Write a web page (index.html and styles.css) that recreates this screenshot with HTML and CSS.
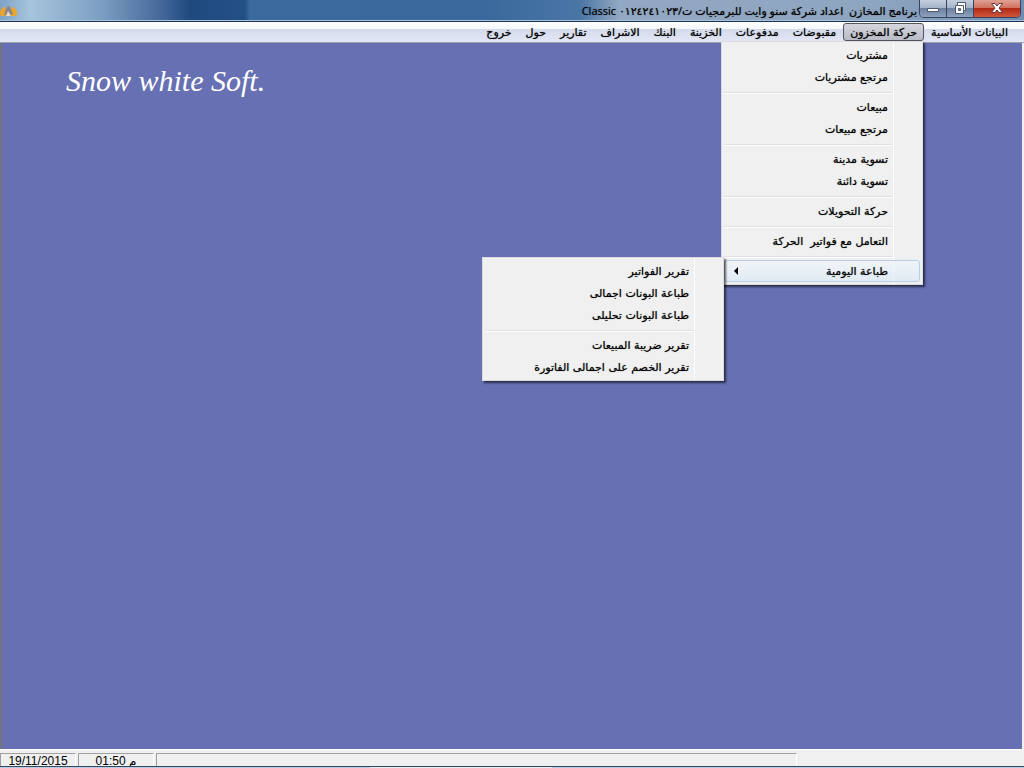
FILE: index.html
```
<!DOCTYPE html>
<html lang="ar">
<head>
    <meta charset="UTF-8">
    <meta name="viewport" content="width=device-width, initial-scale=1.0">
    <title>برنامج المخازن</title>
    <link rel="stylesheet" href="styles.css">
</head>
<body>
    <header class="titlebar">
        <svg class="app-icon" viewBox="0 0 17 12" aria-hidden="true">
            <path d="M0 10C-1 6 2 2 5 2l3 9H2zM17 10c1-4-2-8-5-8l-3 9h6z" fill="#e9a52c"/>
            <path d="M4 10l2-6 2-3 2 1 3 7-2 1z" fill="#8b8590"/>
            <path d="M6 11l2-5 3 5z" fill="#e8dcc0"/>
        </svg>
        <h1 class="title" dir="rtl">برنامج المخازن&nbsp; اعداد شركة سنو وايت للبرمجيات ت/٠١٢٤٢٤١٠٢٣ Classic</h1>
        <div class="controls">
            <button class="control" type="button" aria-label="تصغير">
                <svg viewBox="0 0 14 12"><path d="M1.500 6.500h11v3h-11z" fill="#fff" stroke="#4d5a70"/></svg>
            </button>
            <button class="control" type="button" aria-label="استعادة">
                <svg viewBox="0 0 14 12"><path d="M4.500.5h8v8h-2v3h-8v-8h2z" fill="#fff" stroke="#4d5a70"/><path d="M4.500 3.500h6v5" fill="none" stroke="#4d5a70"/><path d="M5.500 6.500h2v2h-2z" fill="#7c8ba5" stroke="#4d5a70"/></svg>
            </button>
            <button class="control close" type="button" aria-label="إغلاق">
                <svg viewBox="0 0 14 12"><path d="M1.500 1.500h3.500L7 4l2-2.500h3.500L9 6l3.500 4.500H9L7 8l-2 2.500H1.500L5 6z" fill="#fff" stroke="#6b3a3c"/></svg>
            </button>
        </div>
    </header>

    <nav dir="rtl">
        <ul class="menubar">
            <li><button type="button">البيانات الأساسية</button></li>
            <li class="open">
                <button type="button">حركة المخزون</button>
                <ul class="menu">
                    <li><button type="button">مشتريات</button></li>
                    <li><button type="button">مرتجع مشتريات</button></li>
                    <li class="separator"></li>
                    <li><button type="button">مبيعات</button></li>
                    <li><button type="button">مرتجع مبيعات</button></li>
                    <li class="separator"></li>
                    <li><button type="button">تسوية مدينة</button></li>
                    <li><button type="button">تسوية دائنة</button></li>
                    <li class="separator"></li>
                    <li><button type="button">حركة التحويلات</button></li>
                    <li class="separator"></li>
                    <li><button type="button">التعامل مع فواتير&nbsp; الحركة</button></li>
                    <li class="separator"></li>
                    <li class="parent">
                        <button class="selected" type="button">طباعة اليومية
                            <svg class="arrow" viewBox="0 0 4 8"><path d="M4 0v8L0 4z"/></svg>
                        </button>
                        <ul class="menu submenu">
                            <li><button type="button">تقرير الفواتير</button></li>
                            <li><button type="button">طباعة البونات اجمالى</button></li>
                            <li><button type="button">طباعة البونات تحليلى</button></li>
                            <li class="separator"></li>
                            <li><button type="button">تقرير ضريبة المبيعات</button></li>
                            <li><button type="button">تقرير الخصم على اجمالى الفاتورة</button></li>
                        </ul>
                    </li>
                </ul>
            </li>
            <li><button type="button">مقبوضات</button></li>
            <li><button type="button">مدفوعات</button></li>
            <li><button type="button">الخزينة</button></li>
            <li><button type="button">البنك</button></li>
            <li><button type="button">الاشراف</button></li>
            <li><button type="button">تقارير</button></li>
            <li><button type="button">حول</button></li>
            <li><button type="button">خروج</button></li>
        </ul>
    </nav>

    <main class="workspace">
        <p class="brand">Snow white Soft.</p>
    </main>

    <footer class="statusbar">
        <div class="panel">19/11/2015</div>
        <div class="panel">01:50 م</div>
        <div class="panel message"></div>
    </footer>
    <div class="taskbar"></div>
</body>
</html>
```
FILE: styles.css
```
* {
    box-sizing: border-box;
}

body {
    margin: 0;
    height: 100vh;
    display: flex;
    flex-direction: column;
    overflow: hidden;
    background: #f0f0f0;
    color: #000;
    font-family: "DejaVu Sans", sans-serif;
    font-size: 11px;
}

ul {
    list-style: none;
    margin: 0;
    padding: 0;
}

button {
    font: inherit;
    color: inherit;
    text-shadow: inherit;
    margin: 0;
    border: 0;
    background: none;
}

/* title bar */
.titlebar {
    display: flex;
    align-items: flex-start;
    height: 22px;
    padding-right: 3px;
    border-bottom: 1px solid #1c3358;
    background: linear-gradient(90deg, #7fa3c8 0, #a6c4dc 30px, #7d9fc3 100px, #46699a 160px, #1f4a80 190px, #234f87 245px, #3a6a9e 250px, #38689c 480px, #4a76a6 580px, #93a8c2 620px, #8ea5c0 880px, #6f8cb0 100%);
    box-shadow: inset 0 -1px #a9c1da;
}

.app-icon {
    width: 17px;
    height: 12px;
    margin-top: 5px;
}

.title {
    flex: 1;
    margin: 0 2px 0 0;
    font-family: "Open Sans", "DejaVu Sans", sans-serif;
    font-size: 11px;
    font-weight: normal;
    line-height: 22px;
    white-space: nowrap;
    text-shadow: 0 0 1px rgba(0, 0, 0, 0.6);
}

.controls {
    display: flex;
    height: 18px;
    border: 1px solid #34445f;
    border-top: 0;
    border-radius: 0 0 5px 5px;
    overflow: hidden;
}

.control {
    width: 27px;
    padding: 0 0 1px;
    border-right: 1px solid #34445f;
    background: linear-gradient(#c3cedd 0, #a3b2c8 50%, #6d819f 50%, #8fa3bf 100%);
}

.control svg {
    display: block;
    width: 14px;
    height: 12px;
    margin: 0 auto;
}

.control.close {
    width: 46px;
    border-right: 0;
    background: linear-gradient(#dfa193 0, #cf6d5b 50%, #b32a17 50%, #d0553a 100%);
}

/* menus */
.menubar {
    display: flex;
    height: 21px;
    padding: 1px 9px 0;
    border-bottom: 1px solid #a0a3ae;
    background: linear-gradient(#fff 0, #f5f7fb 7px, #d6dbec 7px, #e2e6f5 100%);
    text-shadow: 0 0 1px rgba(0, 0, 0, 0.6);
}

.menubar > li > button {
    height: 18px;
    padding: 1px 6px 0;
    border: 1px solid transparent;
    line-height: 16px;
    white-space: nowrap;
}

.open {
    position: relative;
}

.menubar > .open > button {
    border-color: #55555f;
    border-radius: 3px;
    background: linear-gradient(#d5d6dd, #b9bbc7);
}

.menu {
    position: absolute;
    top: 18px;
    right: 1px;
    z-index: 1;
    width: 202px;
    padding: 2px;
    border: 1px solid #dcdce0;
    background: linear-gradient(#fff, #fff) right 28px top 0 / 1px 100% no-repeat #f0f0f0;
    box-shadow: 2px 2px 2px rgba(0, 0, 0, 0.6);
}

.menu button {
    display: flex;
    align-items: center;
    justify-content: space-between;
    width: 100%;
    height: 22px;
    padding: 0 32px 0 10px;
    white-space: nowrap;
}

.menu .selected {
    border: 1px solid #b4d0e6;
    border-radius: 3px;
    padding: 0 31px 0 9px;
    background: linear-gradient(rgba(240, 245, 250, 0.8), rgba(215, 230, 245, 0.6));
}

.arrow {
    width: 4px;
    height: 8px;
}

.separator {
    height: 8px;
    padding: 4px 28px 0 0;
}

.separator::before {
    content: "";
    display: block;
    border-top: 1px solid #e0e0e0;
    border-bottom: 1px solid #fff;
}

.parent {
    position: relative;
}

.submenu {
    top: -3px;
    right: 196px;
    width: 242px;
}

/* work area */
.workspace {
    flex: 1;
    margin-right: 2px;
    border-left: 2px solid #73737f;
    background: #6670b3;
}

.brand {
    margin: 20px 64px;
    color: #fff;
    font-family: "Liberation Serif", serif;
    font-size: 30px;
    font-style: italic;
    line-height: 36px;
}

/* status bar */
.statusbar {
    display: flex;
    gap: 2px;
    height: 17px;
    padding-top: 3px;
    border-top: 1px solid #fff;
    font-family: "Liberation Sans", "DejaVu Sans", sans-serif;
    font-size: 12px;
}

.panel {
    width: 76px;
    border: 1px solid #a0a0a0;
    border-right-color: #fff;
    border-bottom: 0;
    line-height: 14px;
    text-align: center;
}

.message {
    width: 641px;
}

.taskbar {
    height: 2px;
    border-top: 1px solid #33475e;
    background: linear-gradient(90deg, #b4cbe2 370px, #e6ecf3 370px, #e6ecf3 552px, #b4cbe2 552px);
}
```
